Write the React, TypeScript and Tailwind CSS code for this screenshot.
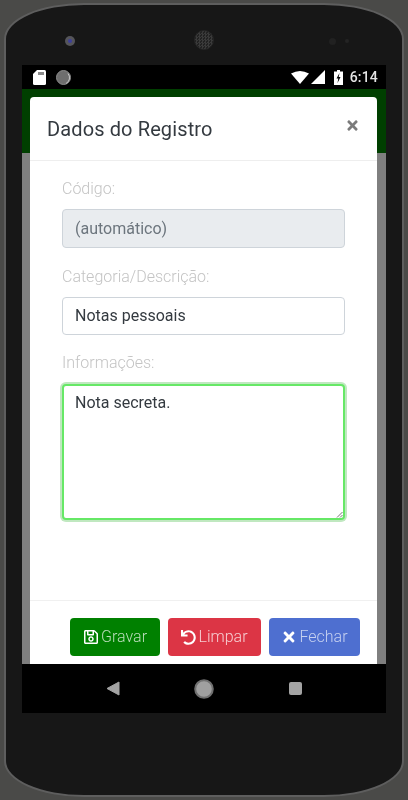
import { FaRegSave, FaTimes, FaUndo } from "react-icons/fa";

const font = "font-['Roboto',sans-serif]";

function Bezel() {
  return (
    <div className="mb-[14px] mt-[26px] grid h-5 shrink-0 grid-cols-3 items-center">
      <div className="pl-[43px]">
        <div className="flex h-[10px] w-[10px] items-center justify-center rounded-full bg-[#55555a]">
          <div className="h-1 w-1 rounded-full bg-[#3d3f9a]" />
        </div>
      </div>
      <div className="flex justify-center">
        <div className="-mt-[2px] h-5 w-5 rounded-full border border-[#262626] bg-[repeating-conic-gradient(#3a3a3a_0_25%,#222222_0_50%)] bg-[length:3px_3px]" />
      </div>
      <div className="flex items-center gap-[9px] pl-[64px]">
        <div className="h-[7px] w-[7px] rounded-full bg-[#212121]" />
        <div className="h-[4px] w-[4px] rounded-full bg-[#242424]" />
      </div>
    </div>
  );
}

function StatusBar() {
  return (
    <div className="flex h-6 shrink-0 items-center justify-between bg-black pl-[11px] pr-2">
      <div className="flex items-center gap-[10px]">
        <svg width="13" height="15" viewBox="0 0 13 15">
          <path d="M4 0H11.500A1.500 1.500 0 0 1 13 1.500V13.500A1.500 1.500 0 0 1 11.500 15H1.500A1.500 1.500 0 0 1 0 13.500V4Z" fill="#fff" />
          <rect x="5" y="2" width="6" height="3" fill="#8a8a8a" />
        </svg>
        <svg width="15" height="15" viewBox="0 0 15 15">
          <circle cx="7.500" cy="7.500" r="7" fill="#6e6e6e" stroke="#8c8c8c" />
          <path d="M12 3.500A6.500 6.500 0 0 1 10 13.500" fill="none" stroke="#c8c8c8" strokeWidth="1" />
        </svg>
      </div>
      <div className="flex items-center">
        <svg width="18" height="13" viewBox="0 0 18 13">
          <path d="M0 2.500Q9 -2.500 18 2.500L9 13Z" fill="#fff" />
        </svg>
        <svg className="ml-[2px]" width="14" height="14" viewBox="0 0 14 14">
          <path d="M14 0V14H0Z" fill="#fff" />
        </svg>
        <svg className="ml-[9px]" width="9" height="15" viewBox="0 0 9 15">
          <path d="M3 0H6V1.500H9V15H0V1.500H3Z" fill="#fff" />
          <path d="M5.500 3L2.500 8.500H4.300L3.500 13L6.500 7H4.700Z" fill="#000" />
        </svg>
        <span className={`${font} ml-[7px] text-[14px] font-medium leading-none tracking-[0.2px] text-[#e4e4e4]`}>6:14</span>
      </div>
    </div>
  );
}

function NavBar() {
  return (
    <div className="flex h-[49px] shrink-0 items-center justify-center bg-black">
      <svg width="14" height="15" viewBox="0 0 14 15">
        <path d="M13 1V14L1 7.500Z" fill="#a3a3a3" stroke="#a3a3a3" strokeLinejoin="round" />
      </svg>
      <svg className="ml-[74px]" width="20" height="20" viewBox="0 0 20 20">
        <circle cx="10" cy="10" r="8.800" fill="#a0a0a0" stroke="#707070" strokeWidth="2" />
      </svg>
      <div className="ml-[75px] h-[13px] w-[13px] rounded-[2px] bg-[#a3a3a3]" />
    </div>
  );
}

function Label({ children, className = "mb-2" }: { children: string; className?: string }) {
  return <p className={`text-[16px] font-light leading-6 text-[#c4c4c4] ${className}`}>{children}</p>;
}

function ActionButton({ icon, label, className }: { icon: React.ReactNode; label: string; className: string }) {
  return (
    <button className={`flex h-[38px] items-center justify-center gap-[2px] rounded-[4px] text-[16px] font-light ${className}`}>
      {icon}
      {label}
    </button>
  );
}

function Modal() {
  return (
    <div className={`${font} absolute left-2 top-2 flex h-[567px] w-[347px] flex-col rounded-t-[4px] bg-white`}>
      <div className="flex h-16 shrink-0 items-start justify-between border-b border-[#eeeeee] pl-[17px] pr-[17px] pt-4">
        <h2 className="text-[20px] font-normal leading-8 tracking-[0.12px] text-[#343a40]">Dados do Registro</h2>
        <FaTimes className="mt-[5px] text-[15px] text-[#7b7b7b]" />
      </div>
      <div className="flex-1 px-8 pt-4">
        <Label>Código:</Label>
        <div className="mb-[17px] flex h-[39px] w-[283px] items-center rounded-[4px] border border-[#ced4da] bg-[#e9ecef] px-3 text-[16px] text-[#6c757d]">
          (automático)
        </div>
        <Label>Categoria/Descrição:</Label>
        <div className="mb-4 flex h-[38px] w-[283px] items-center rounded-[4px] border border-[#ced4da] bg-white px-3 text-[16px] text-[#343a40]">
          Notas pessoais
        </div>
        <Label className="mb-[9px]">Informações:</Label>
        <div className="relative h-[136px] w-[283px] rounded-[4px] border-2 border-[#66e866] bg-white px-[11px] py-[5px] text-[16px] leading-6 text-[#343a40] shadow-[0_0_0_2px_#c0e8c0]">
          Nota secreta.
          <svg className="absolute bottom-0 right-0" width="7" height="7" viewBox="0 0 7 7">
            <path d="M1 6.500L6.500 1M4 6.500L6.500 4" stroke="#777" strokeWidth="1" />
          </svg>
        </div>
      </div>
      <div className="flex h-[64px] shrink-0 justify-end gap-2 border-t border-[#f0f0f0] pr-[17px] pt-[17px]">
        <ActionButton icon={<FaRegSave className="text-[16px] text-white" />} label="Gravar" className="w-[90px] bg-[#008000] text-[#b9dcb9]" />
        <ActionButton icon={<FaUndo className="text-[15px] text-white" />} label="Limpar" className="w-[93px] bg-[#dc3545] text-[#f6cdd1]" />
        <ActionButton icon={<FaTimes className="text-[16px] text-white" />} label="Fechar" className="w-[91px] bg-[#4e6fd0] text-[#c6d1f0]" />
      </div>
    </div>
  );
}

export default function App() {
  return (
    <div className="h-[800px] w-[408px] overflow-hidden bg-[#4a4a48] px-1 py-[3px] blur-[0.35px]">
      <div className="flex h-[794px] flex-col rounded-[80px/36px] border-2 border-[#5e5e5e] bg-[#171717] px-4">
        <Bezel />
        <div className="flex h-[648px] flex-col">
          <StatusBar />
          <div className="relative flex-1 bg-[#7f7f7f]">
            <div className="h-16 bg-[#003f00]" />
            <Modal />
          </div>
          <NavBar />
        </div>
      </div>
    </div>
  );
}
